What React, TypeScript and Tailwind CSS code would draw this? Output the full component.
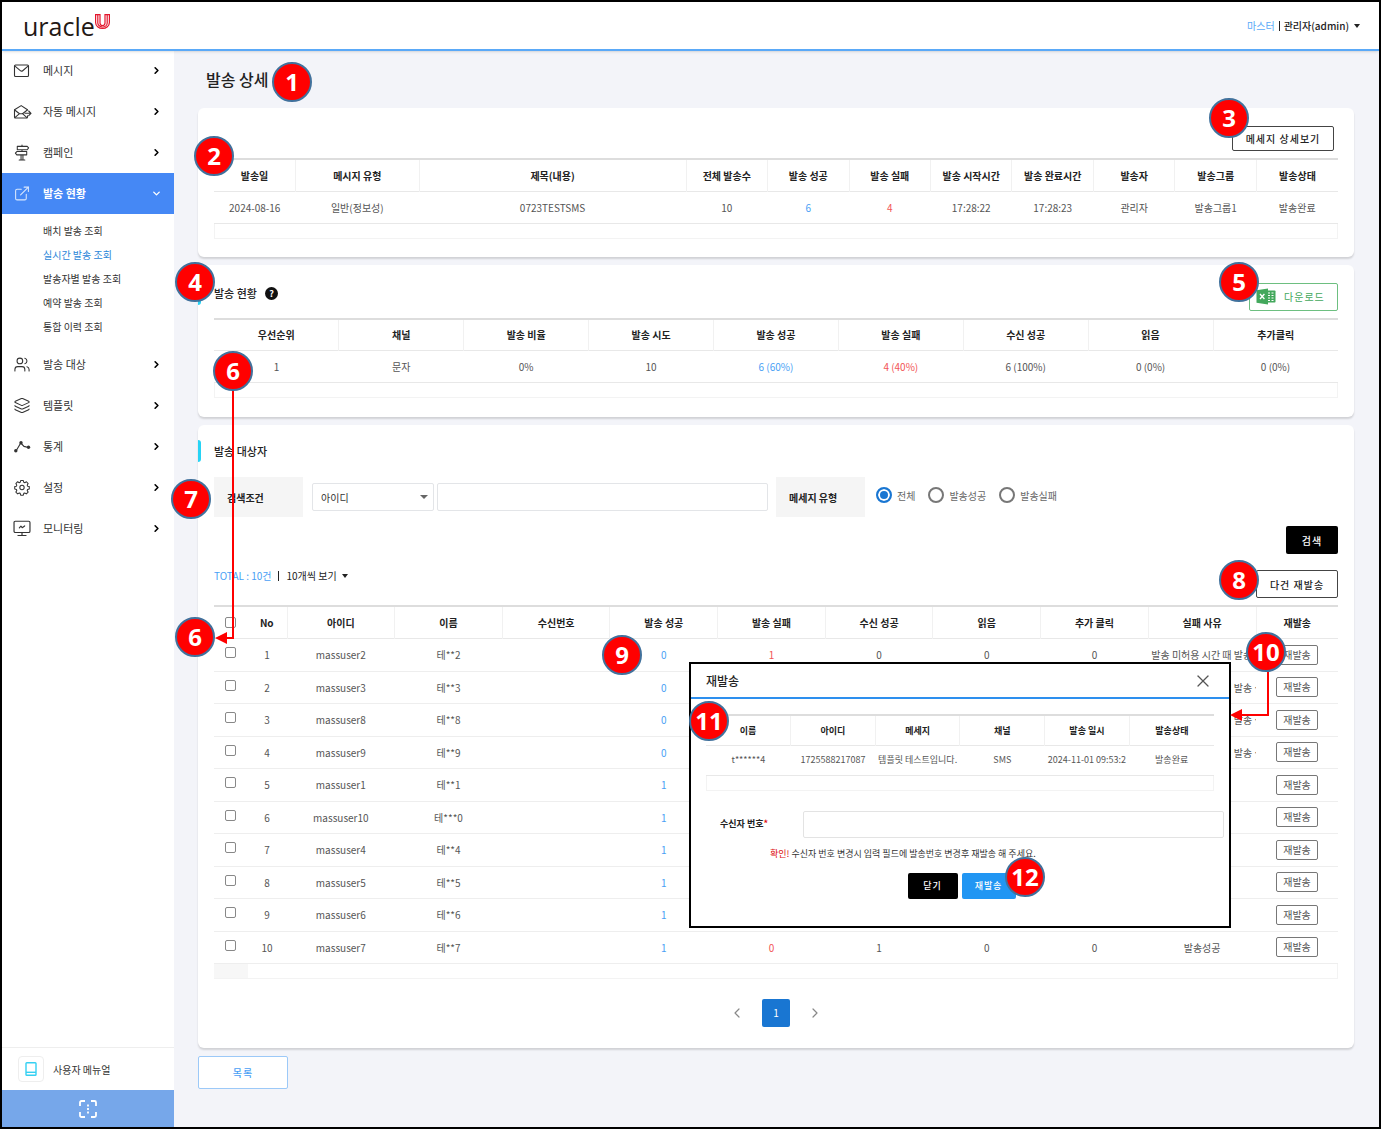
import React, { useState } from 'react';
import { ChevronDown, ChevronLeft, ChevronRight, ExternalLink, Layers, Users, X } from 'lucide-react';

type IconProps = { className?: string };

const MailIcon = ({ className }: IconProps) => (
    <svg viewBox="0 0 20 17" className={className} fill="none" stroke="currentColor" strokeWidth="1.1" strokeLinejoin="round" strokeLinecap="round">
        <rect x="2.500" y="3" width="14" height="11.500" rx="1" />
        <path d="M3 4.200l5.300 4.500a1.900 1.900 0 0 0 2.400 0L16 4.200" />
    </svg>
);

const MailSendIcon = ({ className }: IconProps) => (
    <svg viewBox="0 0 20 17" className={className} fill="none" stroke="currentColor" strokeWidth="1.1" strokeLinejoin="round" strokeLinecap="round">
        <path d="M15.500 7V6.700L9.200 2.600 2.500 6.700V14a1 1 0 0 0 1 1h11a1 1 0 0 0 1-1v-1.200" />
        <path d="M2.700 7l4.800 3.700h3L15 7.300M2.900 14.700l4.600-4M14.900 14.700l-4.400-4" />
        <path d="M13 10.300h6M16.700 8l2.300 2.300-2.300 2.300" />
    </svg>
);

const SignIcon = ({ className }: IconProps) => (
    <svg viewBox="0 0 18 18" className={className} fill="none" stroke="currentColor" strokeWidth="1.1" strokeLinejoin="round" strokeLinecap="round">
        <path d="M4 2.500h10.500l1.500 1.700-1.500 1.800H4zM3.500 8H14v3.500H3.500L2 9.750zM9 1v1.500M9 6v2M8 11.500V17M10 11.500V17M6 17h6" />
    </svg>
);

const StatsIcon = ({ className }: IconProps) => (
    <svg viewBox="0 0 20 17" className={className} fill="none" stroke="currentColor" strokeWidth="1.1">
        <path d="M4 13l4.800-8 3.200 3.400L16.500 9.500" />
        <g fill="currentColor" stroke="none">
            <circle cx="3.800" cy="12.800" r="1.700" />
            <circle cx="9" cy="4.800" r="1.700" />
            <circle cx="16.500" cy="9.300" r="1.700" />
        </g>
    </svg>
);

const GearIcon = ({ className }: IconProps) => (
    <svg viewBox="0 0 18 18" className={className} fill="none" stroke="currentColor" strokeWidth="1.1" strokeLinejoin="round">
        <circle cx="9" cy="9" r="2.300" />
        <path d="M7.600 1.600h2.800l.5 1.900 1 .4 1.800-1 1.800 1.900-1 1.700.4 1.100 1.800.4v2.600l-1.800.5-.4 1.100 1 1.700-1.900 1.900-1.700-1-1 .4-.5 1.900H7.600l-.5-1.900-1-.4-1.700 1-1.900-1.900 1-1.700-.4-1.100-1.800-.5V8l1.800-.4.400-1.100-1-1.700 1.900-1.900 1.700 1 1-.4z" />
    </svg>
);

const MonitorIcon = ({ className }: IconProps) => (
    <svg viewBox="0 0 18 16" className={className} fill="none" stroke="currentColor" strokeWidth="1.1" strokeLinecap="round" strokeLinejoin="round">
        <rect x="1.500" y="1.200" width="15" height="10.600" rx="1.200" />
        <path d="M9 11.800v2.600M5.200 14.600h7.600M6.500 7.400l1.500-1.600 1.200 1.400 2.300-1.600" />
    </svg>
);

const ExcelIcon = ({ className }: IconProps) => (
    <svg viewBox="0 0 20 17" className={className}>
        <rect x="10" y="2.500" width="9.500" height="12" rx="0.800" fill="#43a85c" />
        <path d="M12 5h2M15.500 5h2M12 7.500h2M15.500 7.500h2M12 10h2M15.500 10h2M12 12.500h2M15.500 12.500h2" stroke="#fff" strokeWidth="1.100" />
        <path d="M0.500 2.200L12 0.500v16L0.500 14.800z" fill="#43a85c" />
        <path d="M4 6l4.400 5M8.400 6L4 11" stroke="#fff" strokeWidth="1.300" />
    </svg>
);

const BookIcon = ({ className }: IconProps) => (
    <svg viewBox="0 0 12 14" className={className} fill="none" stroke="#35d0f2" strokeWidth="1.400">
        <rect x="1" y="0.800" width="10" height="12.400" rx="0.800" />
        <path d="M1 10.300h10" />
    </svg>
);

const FocusIcon = ({ className }: IconProps) => (
    <svg viewBox="0 0 18 18" className={className} fill="none" stroke="#fff" strokeWidth="1.800">
        <path d="M1 6V2.500A1.500 1.500 0 0 1 2.500 1H6M12 1h3.500A1.500 1.500 0 0 1 17 2.500V6M17 12v3.500a1.500 1.500 0 0 1-1.500 1.500H12M6 17H2.500A1.500 1.500 0 0 1 1 15.500V12" />
        <path d="M9 4.500v2M9 8v2M9 11.500v2" />
    </svg>
);

const Caret = ({ className = 'w-[6px]' }: IconProps) => (
    <svg viewBox="0 0 8 4" preserveAspectRatio="none" className={`h-1 ${className}`} fill="currentColor"><path d="M0 0h8L4 4z" /></svg>
);

const menuTop = [
    { name: '메시지', Icon: MailIcon },
    { name: '자동 메시지', Icon: MailSendIcon },
    { name: '캠페인', Icon: SignIcon },
];
const menuBottom = [
    { name: '발송 대상', Icon: Users },
    { name: '템플릿', Icon: Layers },
    { name: '통계', Icon: StatsIcon },
    { name: '설정', Icon: GearIcon },
    { name: '모니터링', Icon: MonitorIcon },
];
const subMenu = ['배치 발송 조회', '실시간 발송 조회', '발송자별 발송 조회', '예약 발송 조회', '통합 이력 조회'];

const sendHeads = ['발송일', '메시지 유형', '제목(내용)', '전체 발송수', '발송 성공', '발송 실패', '발송 시작시간', '발송 완료시간', '발송자', '발송그룹', '발송상태'];
const sendRow = ['2024-08-16', '일반(정보성)', '0723TESTSMS', '10', '6', '4', '17:28:22', '17:28:23', '관리자', '발송그룹1', '발송완료'];
const sendWidths = ['w-[7.25%]', 'w-[11%]', 'w-[23.75%]'];

const statusHeads = ['우선순위', '채널', '발송 비율', '발송 시도', '발송 성공', '발송 실패', '수신 성공', '읽음', '추가클릭'];
const statusRow = ['1', '문자', '0%', '10', '6 (60%)', '4 (40%)', '6 (100%)', '0 (0%)', '0 (0%)'];

const targetHeads = ['아이디', '이름', '수신번호', '발송 성공', '발송 실패', '수신 성공', '읽음', '추가 클릭', '실패 사유'];
const failReason = '발송 미허용 시간 때 발송 실패';
const targets = [
    { id: 'massuser2', name: '테**2', ok: 0 },
    { id: 'massuser3', name: '테**3', ok: 0 },
    { id: 'massuser8', name: '테**8', ok: 0 },
    { id: 'massuser9', name: '테**9', ok: 0 },
    { id: 'massuser1', name: '테**1', ok: 1 },
    { id: 'massuser10', name: '테***0', ok: 1 },
    { id: 'massuser4', name: '테**4', ok: 1 },
    { id: 'massuser5', name: '테**5', ok: 1 },
    { id: 'massuser6', name: '테**6', ok: 1 },
    { id: 'massuser7', name: '테**7', ok: 1 },
];

const resendHeads = ['이름', '아이디', '메세지', '채널', '발송 일시', '발송상태'];
const resendRow = ['t******4', '1725588217087', '템플릿 테스트입니다.', 'SMS', '2024-11-01 09:53:2', '발송완료'];

// Numbered callouts pinned over the screen
const pins = [
    { no: 1, x: 292, y: 82 },
    { no: 2, x: 214, y: 156 },
    { no: 3, x: 1229, y: 118 },
    { no: 4, x: 195, y: 282 },
    { no: 5, x: 1239, y: 282 },
    { no: 6, x: 233, y: 371 },
    { no: 6, x: 195, y: 637 },
    { no: 7, x: 191, y: 499 },
    { no: 8, x: 1239, y: 580 },
    { no: 9, x: 622, y: 655 },
    { no: 10, x: 1266, y: 652 },
    { no: 11, x: 709, y: 721 },
    { no: 12, x: 1025, y: 877 },
];

const cellColor = (head: string) =>
    head === '발송 성공' ? 'text-[#4a9ff5]' : head === '발송 실패' ? 'text-[#f25555]' : '';

function MenuItem({ name, Icon }: { name: string; Icon: React.ElementType }) {
    return (
        <a href="#" className="flex h-[41px] items-center pr-3 pl-[10px] text-[#333]">
            <Icon className="h-[17px] w-5 shrink-0" strokeWidth={1.5} />
            <span className="ml-[11px] flex-1 text-[11px]">{name}</span>
            <ChevronRight className="size-[11px] text-black" strokeWidth={3.5} />
        </a>
    );
}

function Sidebar() {
    return (
        <aside className="flex w-[172px] shrink-0 flex-col bg-white">
            <nav className="-mt-px">
                {menuTop.map((m) => <MenuItem key={m.name} {...m} />)}
                <a href="#" className="flex h-[41px] items-center bg-[#4588f5] pr-3 pl-[10px] font-bold text-white">
                    <ExternalLink className="h-[17px] w-5 shrink-0 opacity-80" strokeWidth={1.5} />
                    <span className="ml-[11px] flex-1 text-[11px]">발송 현황</span>
                    <ChevronDown className="size-[11px]" strokeWidth={3} />
                </a>
                <ul className="py-[5px] pl-[41px] text-[10px] leading-6 text-[#333]">
                    {subMenu.map((s, i) => (
                        <li key={s}><a href="#" className={i === 1 ? 'text-[#2b86d9]' : ''}>{s}</a></li>
                    ))}
                </ul>
                {menuBottom.map((m) => <MenuItem key={m.name} {...m} />)}
            </nav>
            <a href="#" className="mt-auto flex h-[43px] items-center border-t border-[#eee] pl-4 text-[10px] text-[#333]">
                <span className="mr-[9px] flex size-[26px] items-center justify-center rounded border border-[#eee]">
                    <BookIcon className="h-[14px] w-3" />
                </span>
                사용자 메뉴얼
            </a>
            <button aria-label="메뉴 접기" className="flex h-[37px] items-center justify-center bg-[#76a7ea]">
                <FocusIcon className="size-[18px]" />
            </button>
        </aside>
    );
}

function Card({ children, className = '' }: { children: React.ReactNode; className?: string }) {
    return <section className={`relative rounded-md bg-white px-4 shadow-[0_2px_2px_rgba(0,0,0,0.14)] ${className}`}>{children}</section>;
}

function CardTitle({ children }: { children: React.ReactNode }) {
    return (
        <h2 className="flex h-[22px] items-center text-[11px] font-medium text-[#222] before:absolute before:left-0 before:h-[22px] before:w-[3px] before:rounded-r before:bg-[#26d3f5]">
            {children}
        </h2>
    );
}

function Th({ children, last, className = '' }: { children: React.ReactNode; last?: boolean; className?: string }) {
    return <th className={`border-[#f1f1f1] p-0 font-bold text-[#222] ${last ? '' : 'border-r'} ${className}`}>{children}</th>;
}

function SimpleTable({ heads, row, widths = [], rowClass }: { heads: string[]; row: string[]; widths?: string[]; rowClass: string }) {
    return (
        <>
            <table className="w-full table-fixed border-t-2 border-[#ddd] text-center text-[#555]">
                <thead>
                    <tr className={`border-b border-[#e8e8e8] ${rowClass}`}>
                        {heads.map((h, i) => <Th key={h} last={i === heads.length - 1} className={widths[i]}>{h}</Th>)}
                    </tr>
                </thead>
                <tbody>
                    <tr className={`border-b border-[#e8e8e8] ${rowClass}`}>
                        {row.map((c, i) => <td key={i} className={`p-0 whitespace-nowrap ${cellColor(heads[i])}`}>{c}</td>)}
                    </tr>
                </tbody>
            </table>
            <div className="h-[15px] border border-t-0 border-[#f3f3f3]" />
        </>
    );
}

const box = 'mx-auto block size-[11px] appearance-none rounded-[2px] border border-[#888] bg-white checked:bg-[#1976d2]';
const radios = ['전체', '발송성공', '발송실패'];

function TargetCard() {
    const [type, setType] = useState('전체');

    return (
        <Card className="mt-2 pt-[15px] pb-[21px]">
            <CardTitle>발송 대상자</CardTitle>
            <div className="mt-[15px] flex h-10 items-center text-[#333]">
                <label htmlFor="cond" className="flex h-10 w-[89px] items-center bg-[#f5f5f5] pl-[13px] font-bold text-[#222]">검색조건</label>
                <div className="relative ml-[9px] w-[122px]">
                    <select id="cond" className="h-7 w-full appearance-none rounded-[2px] border border-[#e3e5e8] bg-white pl-2">
                        <option>아이디</option>
                        <option>이름</option>
                    </select>
                    <Caret className="pointer-events-none absolute top-3 right-[6px] w-2 text-[#666]" />
                </div>
                <input aria-label="검색어" className="ml-[3px] h-7 w-[331px] rounded-[2px] border border-[#e3e5e8] px-2" />
                <span id="msgType" className="ml-2 flex h-10 w-[89px] items-center bg-[#f5f5f5] pl-[13px] font-bold text-[#222]">메세지 유형</span>
                <div role="radiogroup" aria-labelledby="msgType" className="ml-[11px] flex gap-[13px] pb-1 text-[#666]">
                    {radios.map((r) => (
                        <label key={r} className="flex items-center gap-[5px]">
                            <input
                                type="radio"
                                name="type"
                                checked={type === r}
                                onChange={() => setType(r)}
                                className="size-4 appearance-none rounded-full border-2 border-[#777] bg-white checked:border-[#1976d2] checked:bg-[#1976d2] checked:shadow-[inset_0_0_0_2px_white]"
                            />
                            {r}
                        </label>
                    ))}
                </div>
            </div>
            <div className="mt-[9px] flex justify-end">
                <button className="h-7 w-[52px] rounded-[2px] bg-black font-medium tracking-widest text-white">검색</button>
            </div>
            <div className="mt-4 flex h-7 items-start justify-between">
                <div className="flex items-center leading-3 text-[#222]">
                    <span className="text-[#4a9ff5]">TOTAL : 10건</span>
                    <span className="mx-[7px] h-[10px] w-px bg-[#222]" />
                    <button className="flex items-center gap-[5px]">10개씩 보기 <Caret /></button>
                </div>
                <button className="h-7 w-[82px] rounded-[2px] border border-[#444] bg-white font-medium tracking-widest text-[#222]">다건 재발송</button>
            </div>

            <table className="mt-[7px] w-full table-fixed border-t-2 border-[#ddd] text-center text-[#555]">
                <thead>
                    <tr className="h-8 border-b border-[#e8e8e8]">
                        <th className="w-[33px] p-0"><input type="checkbox" aria-label="전체 선택" className={box} /></th>
                        <Th className="w-10">No</Th>
                        {targetHeads.map((h) => <Th key={h}>{h}</Th>)}
                        <Th last className="w-[82px]">재발송</Th>
                    </tr>
                </thead>
                <tbody>
                    {targets.map((t, i) => (
                        <tr key={t.id} className="border-b border-[#eee] odd:h-[33px] even:h-8">
                            <td className="px-0 pt-0 pb-1"><input type="checkbox" aria-label={`${t.id} 선택`} className={box} /></td>
                            <td className="p-0">{i + 1}</td>
                            <td className="p-0">{t.id}</td>
                            <td className="p-0">{t.name}</td>
                            <td className="p-0" />
                            <td className="p-0 text-[#4a9ff5]">{t.ok}</td>
                            <td className="p-0 text-[#f25555]">{1 - t.ok}</td>
                            <td className="p-0">{t.ok}</td>
                            <td className="p-0">0</td>
                            <td className="p-0">0</td>
                            <td className="overflow-hidden px-[3px] py-0 whitespace-nowrap">{t.ok ? '발송성공' : failReason}</td>
                            <td className="p-0">
                                <button className="h-5 w-[42px] rounded-[2px] border border-[#777] bg-white leading-3">재발송</button>
                            </td>
                        </tr>
                    ))}
                </tbody>
            </table>
            <div className="flex h-[15px] border-r border-b border-[#f3f3f3]">
                <div className="w-[34px] bg-[#f7f7f7]" />
            </div>

            <nav aria-label="페이지" className="mt-5 flex items-center justify-center gap-[17px] text-[#888]">
                <button aria-label="이전"><ChevronLeft className="size-4" strokeWidth={1.8} /></button>
                <button className="size-7 rounded-[2px] bg-[#1976d2] text-white">1</button>
                <button aria-label="다음"><ChevronRight className="size-4" strokeWidth={1.8} /></button>
            </nav>
        </Card>
    );
}

function ResendDialog() {
    return (
        <div role="dialog" aria-label="재발송" className="absolute top-[662px] left-[689px] h-[266px] w-[542px] border-2 border-black bg-white text-[9px] text-[#333]">
            <div className="flex h-[35px] items-center justify-between border-b-2 border-[#2d8fee] pr-4 pl-[15px]">
                <h3 className="text-[12px] font-medium text-[#222]">재발송</h3>
                <button aria-label="닫기"><X className="size-5 text-[#555]" strokeWidth={1.5} /></button>
            </div>
            <div className="px-[15px] pt-[15px]">
                <SimpleTable heads={resendHeads} row={resendRow} rowClass="h-[30px]" />
            </div>
            <div className="mt-5 flex items-center pr-[5px] pl-[29px]">
                <label htmlFor="phone" className="w-[83px] font-bold text-[#222]">수신자 번호<span className="text-[#d11]">*</span></label>
                <input id="phone" className="h-[27px] min-w-0 flex-1 rounded-[2px] border border-[#e3e3e3] px-2" />
            </div>
            <p className="mt-2 pl-[79px] leading-4"><span className="text-[#d11]">확인!</span> 수신자 번호 변경시 입력 필드에 발송번호 변경후 재발송 해 주세요.</p>
            <div className="mt-[11px] flex justify-center gap-1 pl-[3px] font-medium tracking-widest text-white">
                <button className="h-[26px] w-[50px] rounded-[2px] bg-black">닫기</button>
                <button className="h-[26px] w-[54px] rounded-[2px] bg-[#2196f3]">재발송</button>
            </div>
        </div>
    );
}

export default function App() {
    return (
        <div className="relative font-['Noto_Sans_CJK_KR','Noto_Sans',sans-serif] text-[10px]">
            <div className="flex min-h-screen flex-col border-2 border-black bg-[#f3f4f9]">
                <header className="relative z-10 flex h-[49px] items-center justify-between border-b-2 border-[#5aa9f8] bg-white pr-[19px] pl-[21px] shadow-sm">
                    <a href="#" aria-label="uracle" className="flex items-center text-[#231815]">
                        <span className="font-['Open_Sans',sans-serif] text-[25px] leading-8 font-medium">uracle</span>
                        <svg viewBox="0 0 15 15" className="mb-2 h-[15px] w-[15px]" fill="none" stroke="#e3172d" strokeWidth="1.200">
                            <path d="M0.600 0.600H5V9a2.500 2.500 0 0 0 5 0V0.600h4.400V8.500a6.900 5.900 0 0 1-13.800 0z" />
                            <path d="M2.800 0.600V9a4.700 4 0 0 0 9.400 0V0.600" />
                        </svg>
                    </a>
                    <div className="flex items-center text-[#222]">
                        <span className="text-[#5aa9f8]">마스터</span>
                        <span className="mx-1 h-[10px] w-px bg-[#222]" />
                        <button className="flex items-center gap-[5px] font-medium">관리자(admin) <Caret /></button>
                    </div>
                </header>

                <div className="flex flex-1">
                    <Sidebar />
                    <main className="min-w-0 flex-1 pr-[25px] pl-6">
                        <h1 className="flex h-[57px] items-center pb-[2px] pl-2 text-[16px] font-medium text-[#222]">발송 상세</h1>

                        <Card className="pt-[18px] pb-[18px]">
                            <div className="mb-[7px] flex justify-end pr-1">
                                <button className="h-[25px] w-[102px] rounded-[2px] border border-[#444] bg-white font-medium tracking-widest text-[#222]">메세지 상세보기</button>
                            </div>
                            <SimpleTable heads={sendHeads} row={sendRow} widths={sendWidths} rowClass="h-8" />
                        </Card>

                        <Card className="mt-2 pt-[18px] pb-[19px]">
                            <div className="mb-[7px] flex h-7 items-start justify-between">
                                <CardTitle>
                                    발송 현황
                                    <button aria-label="도움말" className="ml-2 flex size-[13px] items-center justify-center rounded-full bg-[#111] text-[9px] leading-none font-bold text-white">?</button>
                                </CardTitle>
                                <button className="flex h-7 w-[89px] items-center rounded-[2px] border border-[#6dbf80] bg-white pl-[6px] tracking-widest text-[#43a85c]">
                                    <ExcelIcon className="mr-2 h-[17px] w-5" />
                                    다운로드
                                </button>
                            </div>
                            <SimpleTable heads={statusHeads} row={statusRow} rowClass="h-8" />
                        </Card>

                        <TargetCard />

                        <button className="mt-2 h-[33px] w-[90px] rounded-[2px] border border-[#9cc9f8] bg-white font-medium tracking-widest text-[#4a9ff5]">목록</button>
                    </main>
                </div>
            </div>

            <ResendDialog />

            <svg className="pointer-events-none absolute inset-0 size-full" fill="none" stroke="#f00" strokeWidth="2">
                <path d="M233 390V638H224M1268 672V715H1240" />
                <path d="M215 638l12-6v12zM1230 715l12-6v12z" fill="#f00" stroke="none" />
            </svg>
            {pins.map((p, i) => (
                <span
                    key={i}
                    style={{ left: p.x, top: p.y }}
                    className="absolute flex size-10 -translate-x-1/2 -translate-y-1/2 items-center justify-center rounded-full border-2 border-[#41719c] bg-[#f00] font-['Noto_Sans',sans-serif] text-[24px] font-bold text-white"
                >
                    {p.no}
                </span>
            ))}
        </div>
    );
}
